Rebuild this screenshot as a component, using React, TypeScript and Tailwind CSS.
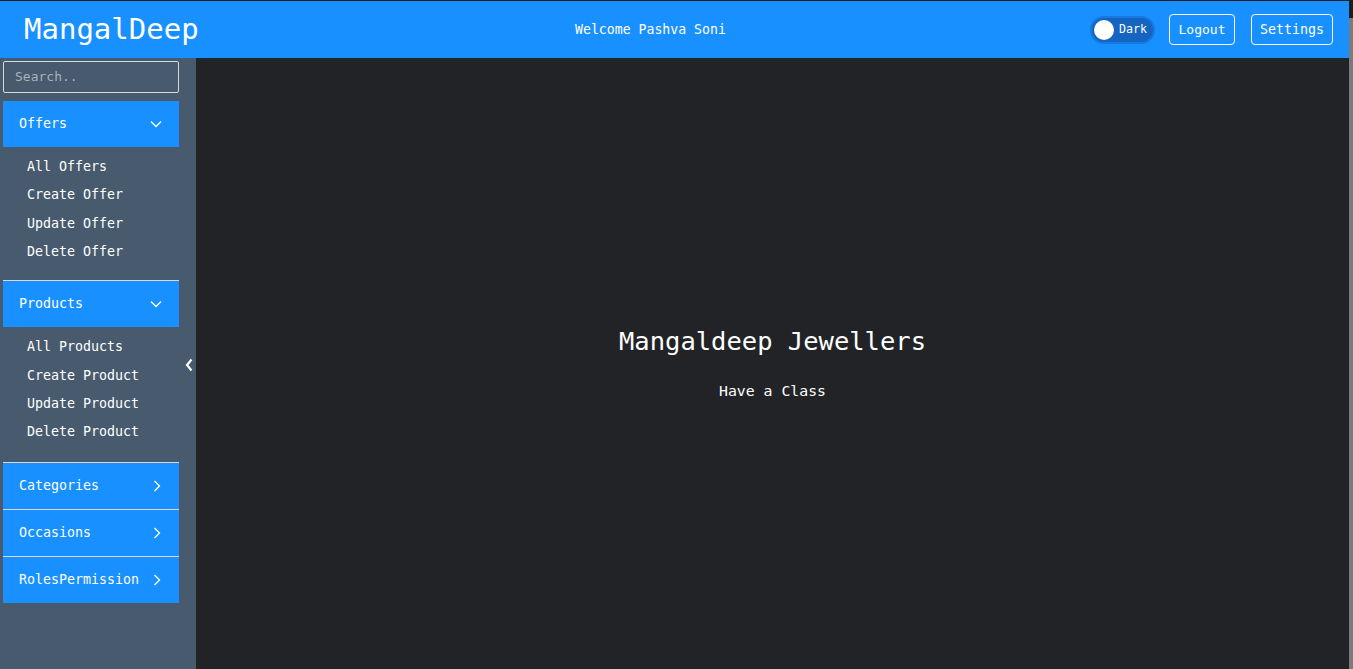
import React from "react";

const mono = { fontFamily: '"DejaVu Sans Mono", "Liberation Mono", monospace' };

function ChevDown() {
  return (
    <svg width="12" height="8" viewBox="0 0 12 8" fill="none">
      <path d="M1 1.5 L6 6.5 L11 1.5" stroke="white" strokeWidth="1.3" />
    </svg>
  );
}
function ChevRight() {
  return (
    <svg width="8" height="12" viewBox="0 0 8 12" fill="none">
      <path d="M1.5 1 L6.5 6 L1.5 11" stroke="white" strokeWidth="1.3" />
    </svg>
  );
}

function MenuHead({ label, open }: { label: string; open?: boolean }) {
  return (
    <div className={`flex h-[46px] w-[176px] items-center justify-between bg-[#1890ff] pl-[16px] text-[13.3px] text-white ${open ? "pr-[17px]" : "pr-[18px]"}`}>
      <span>{label}</span>
      {open ? <ChevDown /> : <ChevRight />}
    </div>
  );
}

function Sub({ items, last }: { items: string[]; last?: boolean }) {
  return (
    <div className={`flex flex-col pt-[6px] ${last ? "pb-[16px]" : "pb-[14px]"}`}>
      {items.map((t) => (
        <div key={t} className="flex h-[28.3px] items-center pl-[24px] text-[13.3px] text-white">
          {t}
        </div>
      ))}
    </div>
  );
}

export default function App() {
  return (
    <div className="flex h-[669px] w-full overflow-hidden bg-[#1e1e1e]" style={mono}>
      <div className="flex min-w-0 flex-1 flex-col pt-[1px]">
        <header className="flex h-[57px] shrink-0 items-center bg-[#1890ff] pl-[24px] pr-[16px] text-white">
          <div className="w-[551px] shrink-0 text-[29px] leading-none">MangalDeep</div>
          <div className="flex-1 text-[13.2px]">Welcome Pashva Soni</div>
          <div className="flex items-center">
            <div className="flex h-[24px] w-[61px] items-center rounded-full bg-[#1565c0] pl-[2px] ring-2 ring-[#1479e0]">
              <div className="h-[20px] w-[20px] rounded-full bg-white" />
              <span className="ml-[5px] text-[11.6px]">Dark</span>
            </div>
            <button className="ml-[16px] h-[31px] w-[66px] rounded-[4px] border border-white text-[13px]">Logout</button>
            <button className="ml-[16px] h-[31px] w-[82px] rounded-[4px] border border-white text-[13.3px]">Settings</button>
          </div>
        </header>
        <div className="flex min-h-0 flex-1">
          <aside className="relative flex w-[196px] shrink-0 flex-col bg-[#475a6e] pl-[3px] pt-[3px]">
            <div className="flex h-[32px] w-[176px] items-center rounded-[2px] border border-[#d9d9d9] pl-[11px] text-[13px] text-[#a9b2bc]">
              Search..
            </div>
            <div className="mt-[8px]">
              <MenuHead label="Offers" open />
              <Sub items={["All Offers", "Create Offer", "Update Offer", "Delete Offer"]} />
            </div>
            <div className="w-[176px] border-t border-[#d9d9d9]">
              <MenuHead label="Products" open />
              <Sub items={["All Products", "Create Product", "Update Product", "Delete Product"]} last />
            </div>
            <div className="w-[176px] border-t border-[#d9d9d9]">
              <MenuHead label="Categories" />
            </div>
            <div className="w-[176px] border-t border-[#d9d9d9]">
              <MenuHead label="Occasions" />
            </div>
            <div className="w-[176px] border-t border-[#d9d9d9]">
              <MenuHead label="RolesPermission" />
            </div>
            <div className="absolute left-[185px] top-[300px]">
              <svg width="8" height="14" viewBox="0 0 8 14" fill="none">
                <path d="M6.5 1.5 L2 7 L6.5 12.5" stroke="white" strokeWidth="2.2" />
              </svg>
            </div>
          </aside>
          <main className="flex flex-1 flex-col items-center bg-[#222326] pt-[266px] text-white">
            <div className="text-[25.5px] leading-[34px]">Mangaldeep Jewellers</div>
            <div className="mt-[22px] text-[14.8px]">Have a Class</div>
          </main>
        </div>
      </div>
      <div className="flex w-[4px] shrink-0 flex-col bg-[#1e1e1e] pt-[18px]">
        <div className="flex-1 bg-[#7b7b7b]" />
      </div>
    </div>
  );
}
